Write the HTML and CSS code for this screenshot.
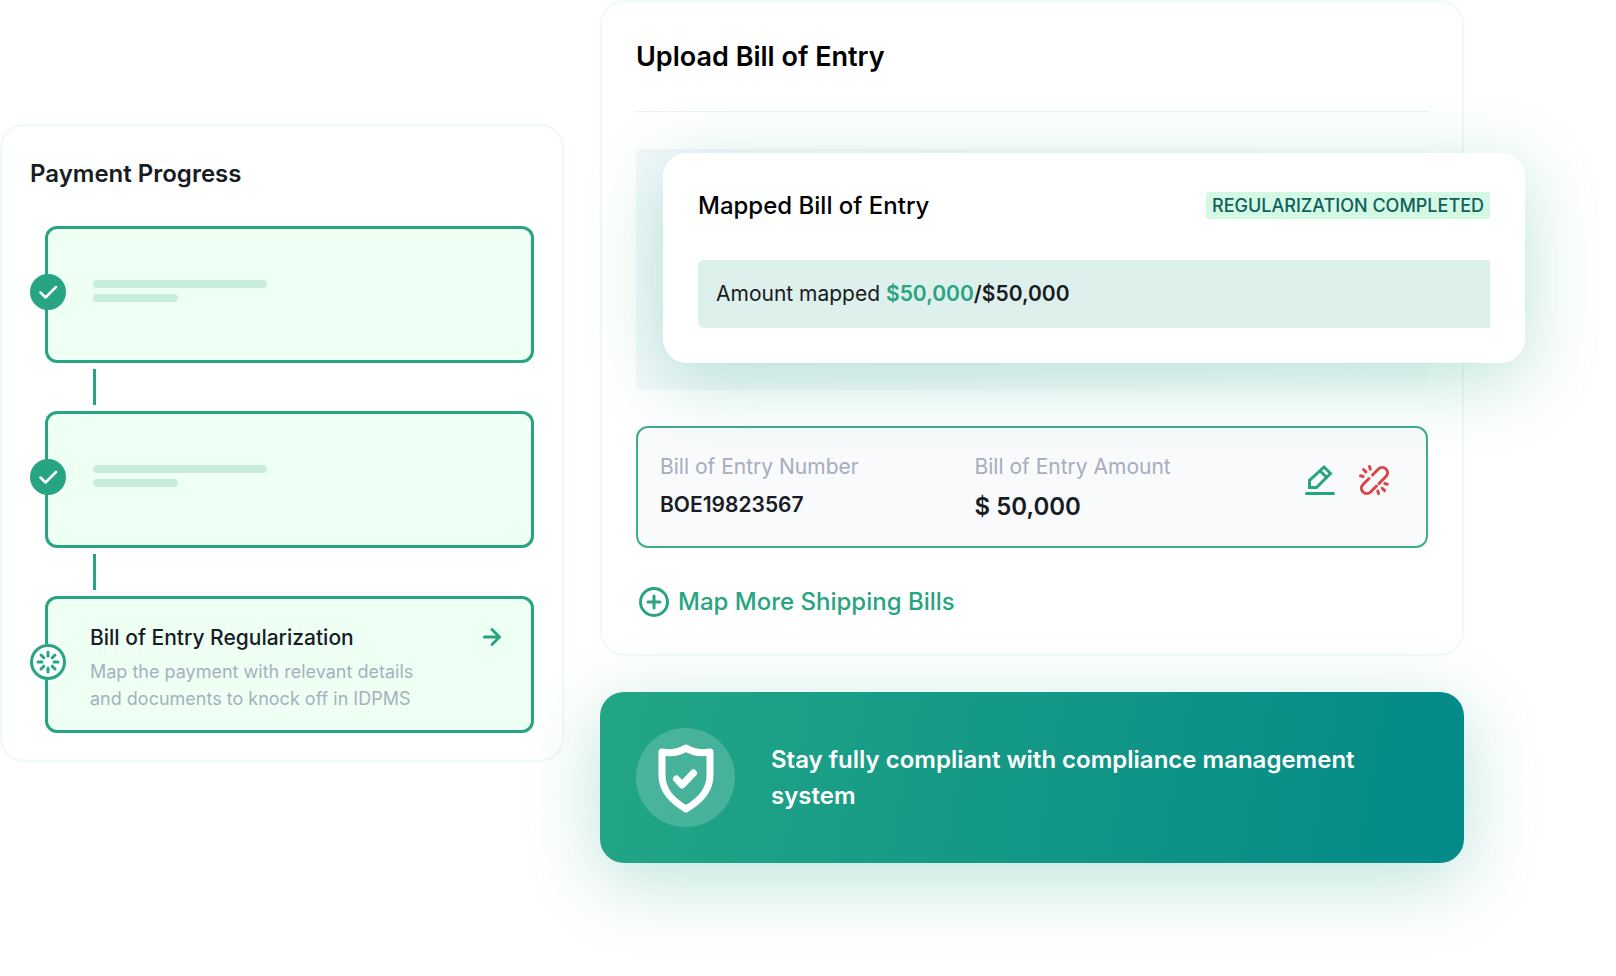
FILE: index.html
```
<!DOCTYPE html>
<html lang="en">
<head>
<meta charset="utf-8">
<title>Bill of Entry</title>
<link rel="stylesheet" href="styles.css">
</head>
<body>
<main class="page">
  <section class="card progress">
    <h2 class="progress-title">Payment Progress</h2>
    <ol class="steps">
      <li class="step">
        <span class="step-badge">
          <svg width="36" height="36" viewBox="0 0 36 36" fill="none" stroke="#fff" stroke-width="2.500" stroke-linecap="round" stroke-linejoin="round"><path d="M10.500 18.500l5 5L26 13"/></svg>
        </span>
        <span class="bar bar-long"></span>
        <span class="bar bar-short"></span>
      </li>
      <li class="step">
        <span class="step-badge">
          <svg width="36" height="36" viewBox="0 0 36 36" fill="none" stroke="#fff" stroke-width="2.500" stroke-linecap="round" stroke-linejoin="round"><path d="M10.500 18.500l5 5L26 13"/></svg>
        </span>
        <span class="bar bar-long"></span>
        <span class="bar bar-short"></span>
      </li>
      <li class="step step-current">
        <span class="step-badge step-badge-active">
          <svg width="36" height="36" viewBox="0 0 36 36" fill="none" stroke="#27a481" stroke-width="3" stroke-linecap="round"><path d="M18 8v4M18 24v4M8 18h4M24 18h4M11 11l2.800 2.800M22.200 22.200l2.800 2.800M11 25l2.800-2.800M22.200 13.800l2.800-2.800"/></svg>
        </span>
        <div class="step-text">
          <h3 class="step-title">Bill of Entry Regularization</h3>
          <p class="step-desc">Map the payment with relevant details and documents to knock off in IDPMS</p>
        </div>
        <button class="icon-button" type="button" aria-label="Open step">
          <svg width="22" height="22" viewBox="0 0 22 22" fill="none" stroke="#27a481" stroke-width="3" stroke-linecap="round" stroke-linejoin="round"><path d="M3.500 11h15M11 3.500l7.500 7.500-7.500 7.500"/></svg>
        </button>
      </li>
    </ol>
  </section>

  <div class="column">
    <section class="card upload">
      <h1 class="upload-title">Upload Bill of Entry</h1>
      <div class="slot">
        <article class="mapped">
          <header class="mapped-head">
            <h2 class="mapped-title">Mapped Bill of Entry</h2>
            <span class="chip">REGULARIZATION COMPLETED</span>
          </header>
          <p class="amount">Amount mapped <strong><span class="amount-done">$50,000</span>/$50,000</strong></p>
        </article>
      </div>
      <div class="entry">
        <dl class="field">
          <dt class="field-label">Bill of Entry Number</dt>
          <dd class="field-value">BOE19823567</dd>
        </dl>
        <dl class="field">
          <dt class="field-label">Bill of Entry Amount</dt>
          <dd class="field-value field-value-large">$ 50,000</dd>
        </dl>
        <div class="entry-actions">
          <button class="icon-button" type="button" aria-label="Edit">
            <svg width="36" height="36" viewBox="0 0 36 36" fill="none" stroke="#27a481" stroke-width="3" stroke-linecap="round" stroke-linejoin="round"><path d="M4.500 31.500h27"/><path stroke-linejoin="miter" d="M7.500 25.500v-7L22 5l6.500 6.500L14.500 25.500zM18 8.800l6.500 6.500"/></svg>
          </button>
          <button class="icon-button" type="button" aria-label="Unlink">
            <svg width="36" height="36" viewBox="0 0 36 36" fill="none" stroke="#dc4446" stroke-width="3" stroke-linecap="round" stroke-linejoin="round"><path d="M16.500 13l6-6a5.200 5.200 0 0 1 7.500 7.500L23 21.500M13 16.500l-6 6a5.200 5.200 0 0 0 7.500 7.500L20.500 24"/><path d="M4.500 13.800l2.600.7M7.500 7.500l2.400 2.400M13.500 4.500l.8 2.600M28.800 21.500l2.600.7M26.200 26.200l2.400 2.400M21.800 29l.7 2.600"/></svg>
          </button>
        </div>
      </div>
      <button class="map-more" type="button">
        <svg width="36" height="36" viewBox="0 0 36 36" fill="none" stroke="#27a481" stroke-width="3" stroke-linecap="round"><circle cx="18" cy="18" r="13.500"/><path d="M18 12v12M12 18h12"/></svg>
        Map More Shipping Bills
      </button>
    </section>

    <section class="banner">
      <span class="banner-icon">
        <svg width="60" height="72" viewBox="0 0 60 72" fill="none" stroke="#fff" stroke-width="7" stroke-linecap="round" stroke-linejoin="round"><path d="M30 6C24 10 15 11.500 6 10V33C6 48 15 58 30 67C45 58 54 48 54 33V10C45 11.500 36 10 30 6z"/><path d="M20.500 37l5.500 6L37.500 31"/></svg>
      </span>
      <p class="banner-text">Stay fully compliant with compliance management system</p>
    </section>
  </div>
</main>
</body>
</html>
```
FILE: styles.css
```
* {
  box-sizing: border-box;
}

body {
  margin: 0;
  background: #fff;
  color: #181c24;
  font-family: Inter, "Liberation Sans", sans-serif;
  overflow-x: hidden;
}

h1, h2, h3, p, dl, dd, ol {
  margin: 0;
  padding: 0;
}

button {
  padding: 0;
  border: 0;
  background: none;
  font: inherit;
  cursor: pointer;
}

svg {
  display: block;
}

.page {
  display: grid;
  grid-template-columns: 564fr 864fr;
  gap: 36px;
  align-items: start;
  min-height: 100vh;
  padding-right: 152px;
}

.card {
  border: 2px solid #effaf7;
  border-radius: 24px;
  background: #fff;
}

.progress {
  margin-top: 124px;
  padding: 30px 28px 27px;
}

.progress-title {
  font-size: 24px;
  font-weight: 600;
  line-height: 36px;
}

.steps {
  display: flex;
  flex-direction: column;
  gap: 48px;
  margin: 34px 0 0 15px;
  list-style: none;
}

.step {
  position: relative;
  display: flex;
  flex-direction: column;
  gap: 6px;
  height: 137px;
  padding: 51px 42px 0 45px;
  border: 3px solid #27a481;
  border-radius: 12px;
  background: #eefff4;
}

.step + .step::before {
  content: "";
  position: absolute;
  left: 45px;
  bottom: calc(100% + 9px);
  width: 3px;
  height: 36px;
  background: #27a481;
}

.step-badge {
  position: absolute;
  left: -18px;
  top: 45px;
  border-radius: 50%;
  background: #27a481;
}

.step-badge-active {
  background: #fff;
  box-shadow: inset 0 0 0 3px #27a481;
}

.bar {
  height: 8px;
  border-radius: 4px;
  background: #c9eddc;
}

.bar-long {
  width: 174px;
}

.bar-short {
  width: 85px;
}

.step-current {
  flex-direction: row;
  justify-content: space-between;
  align-items: flex-start;
  padding: 23px 28px 0 42px;
}

.step-text {
  max-width: 350px;
}

.step-title {
  margin-bottom: 4px;
  font-size: 21px;
  font-weight: 500;
  line-height: 32px;
}

.step-desc {
  color: #a5b1bd;
  font-size: 18px;
  line-height: 27px;
}

.step-current .icon-button {
  margin-top: 4px;
}

.column {
  display: flex;
  flex-direction: column;
  gap: 36px;
}

.upload {
  padding: 35px 34px 34px;
}

.upload-title {
  padding-bottom: 34px;
  border-bottom: 1px solid #edf3f4;
  color: #000;
  font-size: 27px;
  font-weight: 600;
  line-height: 40px;
}

.slot {
  position: relative;
  height: 241px;
  margin: 37px 0 36px;
  border-radius: 6px;
  background: linear-gradient(90deg, #f3f8fb, #fafdfd);
}

.mapped {
  position: absolute;
  z-index: 1;
  left: 27px;
  right: -97px;
  top: 4px;
  padding: 35px;
  border-radius: 24px;
  background: #fff;
}

.slot::after {
  content: "";
  position: absolute;
  left: 27px;
  right: -97px;
  top: 4px;
  height: 209px;
  border-radius: 24px;
  box-shadow: 0 18px 72px rgba(34, 165, 133, 0.3);
}

.mapped-head {
  display: flex;
  justify-content: space-between;
  align-items: flex-start;
  margin-bottom: 36px;
}

.mapped-title {
  color: #000;
  font-size: 24px;
  font-weight: 500;
  line-height: 36px;
}

.chip {
  margin-top: 4px;
  padding: 0 6px;
  border-radius: 3px;
  background: #d3f9e4;
  color: #0f5f5b;
  font-size: 18px;
  font-weight: 500;
  line-height: 27px;
}

.amount {
  padding: 18px;
  border-radius: 6px 0 0 6px;
  background: #def0eb;
  font-size: 21px;
  line-height: 32px;
}

.amount strong {
  font-weight: 600;
}

.amount-done {
  color: #27a481;
}

.entry {
  display: grid;
  grid-template-columns: 316fr 329fr auto;
  align-items: start;
  padding: 23px 34px 21px 22px;
  border: 2px solid #3fae8c;
  border-radius: 12px;
  background: #f9fafc;
}

.field-label {
  color: #a6adbc;
  font-size: 21px;
  line-height: 32px;
}

.field-value {
  margin-top: 6px;
  font-size: 21px;
  font-weight: 600;
  line-height: 32px;
}

.field-value-large {
  font-size: 24px;
  line-height: 36px;
}

.entry-actions {
  display: flex;
  gap: 18px;
  padding-top: 11px;
}

.map-more {
  display: flex;
  align-items: center;
  gap: 6px;
  margin-top: 36px;
  color: #27a481;
  font-size: 24px;
  font-weight: 500;
  line-height: 36px;
}

.banner {
  display: flex;
  align-items: center;
  gap: 36px;
  padding: 36px;
  border-radius: 24px;
  background: linear-gradient(100deg, #23a685 0%, #048a88 96%);
  box-shadow: 0 18px 72px rgba(34, 165, 133, 0.3);
}

.banner-icon {
  display: grid;
  flex: none;
  place-items: center;
  width: 99px;
  height: 99px;
  border-radius: 50%;
  background: rgba(255, 255, 255, 0.18);
}

.banner-text {
  color: #fff;
  font-size: 24px;
  font-weight: 600;
  line-height: 36px;
}
```
